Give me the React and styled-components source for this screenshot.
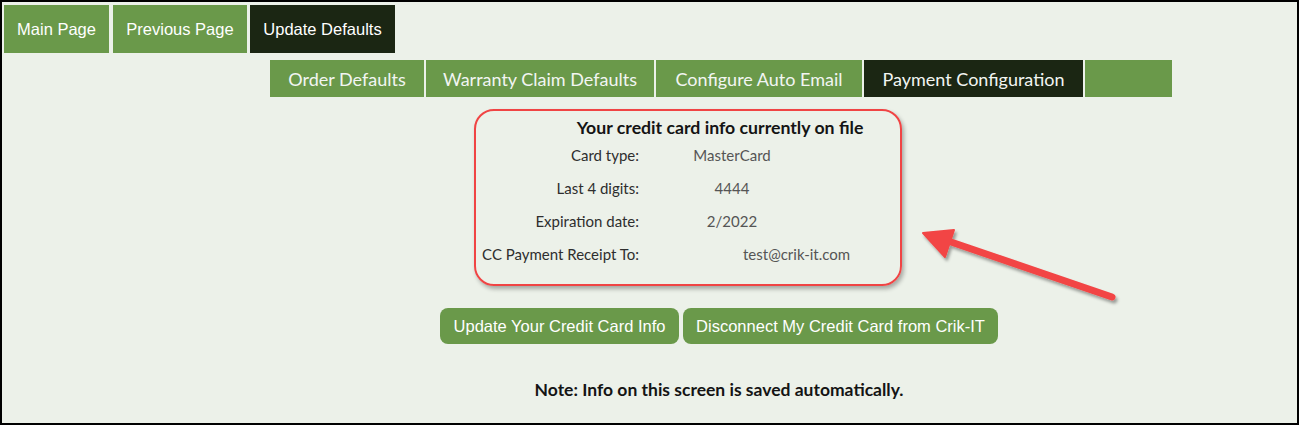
import styled, { createGlobalStyle } from "styled-components";

const GlobalStyle = createGlobalStyle`
  html, body {
    margin: 0;
    padding: 0;
  }
  body {
    background: #ecf1e9;
  }
`;

const topLinks = [
  { label: "Main Page", width: 105 },
  { label: "Previous Page", width: 134 },
  { label: "Update Defaults", width: 145, active: true },
];

const tabs = [
  { label: "Order Defaults", width: 154 },
  { label: "Warranty Claim Defaults", width: 228 },
  { label: "Configure Auto Email", width: 206 },
  { label: "Payment Configuration", width: 219, active: true },
  { label: "", width: 87 },
];

const cardRows = [
  { label: "Card type:", value: "MasterCard" },
  { label: "Last 4 digits:", value: "4444" },
  { label: "Expiration date:", value: "2/2022" },
  { label: "CC Payment Receipt To:", value: "test@crik-it.com", indent: 104 },
];

export default function App() {
  return (
    <>
      <GlobalStyle />
      <Frame>
        <TopNav>
          {topLinks.map((link) => (
            <NavButton key={link.label} $active={link.active} $width={link.width}>
              {link.label}
            </NavButton>
          ))}
        </TopNav>
        <SubNav>
          {tabs.map((tab, i) => (
            <Tab key={i} $active={tab.active} $width={tab.width}>
              {tab.label}
            </Tab>
          ))}
        </SubNav>
        <Card>
          <CardTitle>Your credit card info currently on file</CardTitle>
          <InfoGrid>
            {cardRows.map((row) => (
              <InfoRow key={row.label}>
                <Label>{row.label}</Label>
                <Value $indent={row.indent}>{row.value}</Value>
              </InfoRow>
            ))}
          </InfoGrid>
        </Card>
        <Actions>
          <ButtonRow>
            <ActionButton $width={239}>Update Your Credit Card Info</ActionButton>
            <ActionButton $width={315}>Disconnect My Credit Card from Crik-IT</ActionButton>
          </ButtonRow>
          <Note>Note: Info on this screen is saved automatically.</Note>
        </Actions>
        <Arrow viewBox="0 0 220 90" aria-hidden="true">
          <defs>
            <filter id="arrowShadow" x="-20%" y="-40%" width="140%" height="180%">
              <feDropShadow dx="2" dy="3" stdDeviation="1.6" floodColor="#000" floodOpacity="0.35" />
            </filter>
          </defs>
          <g filter="url(#arrowShadow)" fill="#f24545" stroke="#f24545">
            <line x1="199" y1="77" x2="38" y2="22" strokeWidth="7" strokeLinecap="round" />
            <polygon points="10,13 41,10 32,37" strokeWidth="2" strokeLinejoin="round" />
          </g>
        </Arrow>
      </Frame>
    </>
  );
}

const Frame = styled.div`
  position: relative;
  box-sizing: border-box;
  width: 1299px;
  height: 425px;
  border: 2px solid #000;
  background: #ecf1e9;
  overflow: hidden;
`;

const TopNav = styled.div`
  display: flex;
  gap: 4px;
  padding: 3px 0 0 2px;
  & > :last-child {
    margin-left: -1px;
  }
`;

const NavButton = styled.div`
  display: flex;
  align-items: center;
  justify-content: center;
  width: ${(p) => p.$width}px;
  height: 48px;
  background: ${(p) => (p.$active ? "#1b2613" : "#6a994a")};
  color: #fff;
  font-family: "Liberation Sans", Arial, sans-serif;
  font-size: 16.5px;
  white-space: nowrap;
`;

const SubNav = styled.div`
  display: flex;
  gap: 2px;
  margin: 7px 0 0 268px;
`;

const Tab = styled.div`
  display: flex;
  align-items: center;
  justify-content: center;
  width: ${(p) => p.$width}px;
  height: 37px;
  background: ${(p) => (p.$active ? "#1b2613" : "#6a994a")};
  color: #f2f5f2;
  font-family: Lato, "Open Sans", sans-serif;
  font-size: 18px;
`;

const Card = styled.div`
  box-sizing: border-box;
  width: 428px;
  height: 177px;
  margin: 12px 0 0 472px;
  padding: 6px 0 0;
  border: 2.5px solid #f04444;
  border-radius: 20px;
  box-shadow: 2px 3px 4px rgba(0, 0, 0, 0.3);
  font-family: Lato, "Open Sans", sans-serif;
`;

const CardTitle = styled.div`
  height: 22px;
  line-height: 22px;
  padding-left: 64px;
  text-align: center;
  font-size: 17.7px;
  font-weight: 700;
  color: #141414;
`;

const InfoGrid = styled.div`
  display: flex;
  flex-direction: column;
`;

const InfoRow = styled.div`
  display: grid;
  grid-template-columns: 163px 186px;
  align-items: center;
  height: 32.8px;
  font-size: 15px;
`;

const Label = styled.div`
  text-align: right;
  color: #2e2e2e;
  white-space: nowrap;
`;

const Value = styled.div`
  text-align: ${(p) => (p.$indent ? "left" : "center")};
  padding-left: ${(p) => p.$indent || 0}px;
  color: #555;
  white-space: nowrap;
`;

const Actions = styled.div`
  display: flex;
  flex-direction: column;
  align-items: center;
  width: 560px;
  margin: 22px 0 0 437px;
`;

const ButtonRow = styled.div`
  display: flex;
  gap: 4px;
`;

const ActionButton = styled.button`
  flex-shrink: 0;
  width: ${(p) => p.$width}px;
  height: 36px;
  padding: 0;
  border: none;
  border-radius: 8px;
  background: #6a994a;
  color: #fff;
  font-family: "Liberation Sans", Arial, sans-serif;
  font-size: 16.5px;
  white-space: nowrap;
`;

const Note = styled.div`
  margin-top: 35px;
  font-family: Lato, "Open Sans", sans-serif;
  font-size: 17.5px;
  font-weight: 700;
  color: #141414;
`;

const Arrow = styled.svg`
  position: absolute;
  left: 911px;
  top: 218px;
  width: 220px;
  height: 90px;
  overflow: visible;
`;
